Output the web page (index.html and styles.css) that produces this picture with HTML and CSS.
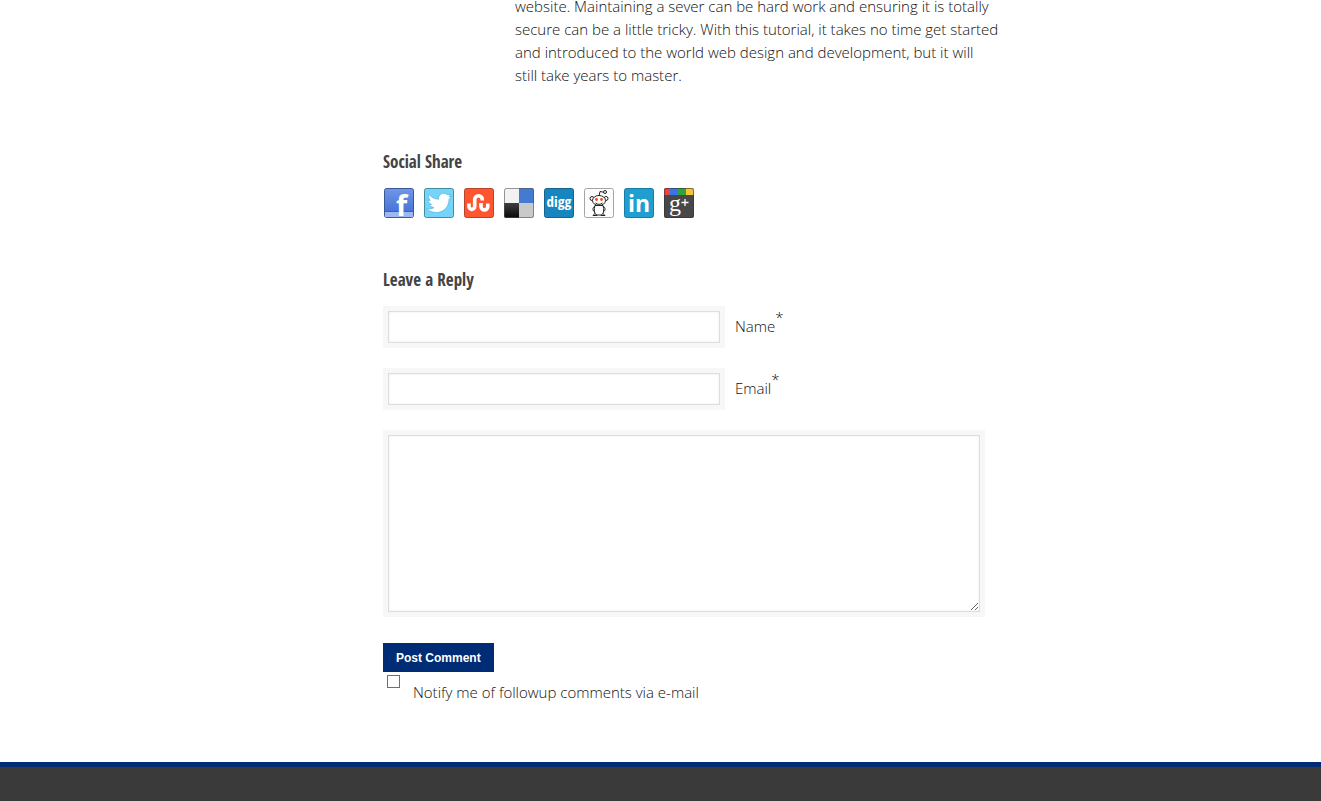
FILE: index.html
```html
<!DOCTYPE html>
<html lang="en">
<head>
<meta charset="utf-8">
<title>Leave a Reply</title>
<meta name="viewport" content="width=device-width, initial-scale=1">
<link rel="stylesheet" href="styles.css">
</head>
<body>
<div class="page">
  <main class="content">
    <article class="entry">
      <p>website. Maintaining a sever can be hard work and ensuring it is totally secure can be a little tricky. With this tutorial, it takes no time get started and introduced to the world web design and development, but it will<br>still take years to master.</p>
    </article>

    <section class="share">
      <h3 class="heading">Social Share</h3>
      <div class="share-list">
        <a href="#" aria-label="Facebook"><svg class="icon" viewBox="0 0 32 32">
          <defs><linearGradient id="fb" x1="0" y1="0" x2="0" y2="1"><stop offset="0" stop-color="#6f97e8"/><stop offset="1" stop-color="#3f6bd3"/></linearGradient></defs>
          <rect x="1.5" y="1.5" width="29" height="29" rx="2" fill="url(#fb)" stroke="#3b5795"/>
          <path d="M2 25h28v5H2z" fill="#9db8f0"/><path d="M2 24.5h28" stroke="#3b5fb5" stroke-width="1"/>
          <text class="logo-f" x="13" y="29">f</text></svg></a>
        <a href="#" aria-label="Twitter"><svg class="icon" viewBox="0 0 32 32">
          <rect x="1.5" y="1.5" width="29" height="29" rx="2" fill="#76d3fa" stroke="#418c9f"/>
          <path d="M3.500 21.500c3.500.9 6 .3 7.500-1-2.500-.3-4-1.300-4.500-3l2-.1c-2-.9-3.200-2.500-3.200-4.500l2 .5C5.600 11.800 5 9.800 6.200 7.500c2.700 3.200 5.500 4.500 9.400 4.700-.5-3.400 2.200-6 5.100-5.900 1.700 0 3 .7 3.900 1.800l3-1.100-1.300 2.700 2.200-.2-2.500 2.800c.2 6.800-4.700 13.200-12.500 13.200-4 0-7.500-1.300-10-4z" fill="#fff" stroke="#4eb5dd" stroke-width=".7"/></svg></a>
        <a href="#" aria-label="StumbleUpon"><svg class="icon" viewBox="0 0 32 32">
          <rect x="1.500" y="1.500" width="29" height="29" rx="2" fill="#ff5630" stroke="#bb432b"/>
          <path d="M6 16.500v3a2.800 2.800 0 0 0 5.700 0v-7a3.800 3.800 0 0 1 7.600 0v1" fill="none" stroke="#fff" stroke-width="3.600"/>
          <path d="M18 16v3.500a3.400 3.400 0 0 0 6.800 0v-3" fill="none" stroke="#fff" stroke-width="3.600"/></svg></a>
        <a href="#" aria-label="Delicious"><svg class="icon" viewBox="0 0 32 32">
          <defs><linearGradient id="dk" x1="0" y1="0" x2="0" y2="1"><stop offset="0" stop-color="#404040"/><stop offset="1" stop-color="#080808"/></linearGradient></defs>
          <rect x="1" y="1" width="30" height="30" rx="2" fill="#f2f2f2"/>
          <path d="M16 1h13a2 2 0 0 1 2 2v13H16z" fill="#447bd0"/><path d="M1 16h15v15H3a2 2 0 0 1-2-2z" fill="url(#dk)"/><path d="M16 16h15v13a2 2 0 0 1-2 2H16z" fill="#c9c9c9"/>
          <rect x="1.500" y="1.500" width="29" height="29" rx="2" fill="none" stroke="#555" stroke-opacity=".6"/></svg></a>
        <a href="#" aria-label="Digg"><svg class="icon" viewBox="0 0 32 32">
          <rect x="1.500" y="1.500" width="29" height="29" rx="2" fill="#1786c0" stroke="#17638b"/>
          <text class="logo-digg" x="16" y="20" text-anchor="middle">digg</text></svg></a>
        <a href="#" aria-label="Reddit"><svg class="icon" viewBox="0 0 32 32">
          <rect x="1.500" y="1.500" width="29" height="29" rx="2" fill="#fcfcfc" stroke="#a5a5a5"/>
          <g fill="#fff" stroke="#222" stroke-width="1">
            <path d="M16 9l1-4.500 4 .8" fill="none"/><circle cx="22" cy="5" r="1.500"/>
            <circle cx="9" cy="11.500" r="2"/><circle cx="23" cy="11.500" r="2"/>
            <path d="M12 19c-3 2-2.500 5 0 6M20 19c3 2 2.500 5 0 6"/>
            <path d="M12 18.500c-1.300 4-.8 7.500 1 9.500h6c1.800-2 2.300-5.500 1-9.500z"/>
            <ellipse cx="16" cy="13.500" rx="6.500" ry="5"/><path d="M12.500 16c2 1.800 5 1.800 7 0M10 28.500c1-2 3-2 4 0zM18 28.500c1-2 3-2 4 0z"/>
          </g><circle cx="13.500" cy="12.500" r="1.400" fill="#f04b20"/><circle cx="18.500" cy="12.500" r="1.400" fill="#f04b20"/></svg></a>
        <a href="#" aria-label="LinkedIn"><svg class="icon" viewBox="0 0 32 32">
          <rect x="1.500" y="1.500" width="29" height="29" rx="2" fill="#1f9ed1" stroke="#187ca7"/>
          <text class="logo-in" x="16" y="25" text-anchor="middle">in</text></svg></a>
        <a href="#" aria-label="Google Plus"><svg class="icon" viewBox="0 0 32 32">
          <rect x="1" y="1" width="30" height="30" rx="2" fill="#484848"/>
          <path d="M3 1h5v7H1V3a2 2 0 0 1 2-2z" fill="#e8463d"/><path d="M7 1h8v7H7z" fill="#3b74e6"/><path d="M15 1h8v7h-8z" fill="#2da33c"/><path d="M23 1h6a2 2 0 0 1 2 2v5h-8z" fill="#f7c534"/>
          <rect x="1.500" y="1.500" width="29" height="29" rx="2" fill="none" stroke="#333" stroke-opacity=".6"/>
          <text class="logo-g" x="6" y="24">g</text><path d="M18.500 15.500h7M22 12v7" stroke="#fff" stroke-width="1.300"/></svg></a>
      </div>
    </section>

    <section class="reply">
      <h3 class="heading">Leave a Reply</h3>
      <form class="form">
        <div class="row">
          <span class="field"><input class="input" type="text" id="author" required></span>
          <label class="label" for="author">Name<sup>*</sup></label>
        </div>
        <div class="row">
          <span class="field"><input class="input" type="email" id="email" required></span>
          <label class="label" for="email">Email<sup>*</sup></label>
        </div>
        <div class="field field-wide"><textarea class="input textarea" aria-label="Comment"></textarea></div>
        <button class="submit" type="submit">Post Comment</button>
        <div class="notify">
          <input class="check" type="checkbox" id="subscribe">
          <label for="subscribe">Notify me of followup comments via e-mail</label>
        </div>
      </form>
    </section>
  </main>
</div>
<footer class="footer"></footer>
</body>
</html>
```
FILE: styles.css
```css
* { box-sizing: border-box; }
html, body { height: 100%; }
body {
  margin: 0;
  display: flex;
  flex-direction: column;
  overflow: hidden;
  background: #fff;
  color: #111;
  font: 325 15px/23px "Open Sans", sans-serif;
}
p, h3 { margin: 0; }
.page {
  width: 100%;
  max-width: 955px;
  margin: -5px auto 0;
  padding-left: 200px;
}
.entry { max-width: 626px; padding-left: 132px; }
.heading {
  color: #444;
  font: bold 17px/24px "Open Sans Condensed", "Noto Sans Condensed", "Liberation Sans Narrow", "Open Sans", sans-serif;
}
.share { margin-top: 63px; }
.share-list { display: flex; gap: 8px; margin-top: 13px; }
.share-list a { display: block; height: 32px; }
.icon { display: block; width: 32px; height: 32px; overflow: visible; }
.icon text { fill: #fff; font-family: "Open Sans", sans-serif; font-weight: 700; }
.icon .logo-f { font-size: 29px; }
.icon .logo-digg { font-size: 15px; font-family: "Open Sans Condensed", "Liberation Sans Narrow", "Open Sans", sans-serif; }
.icon .logo-in { font-size: 23px; }
.icon .logo-g { font-family: "Liberation Serif", serif; font-size: 24px; font-weight: 400; }

.reply { margin-top: 49px; }
.form { margin-top: 14px; }
.row { display: flex; align-items: center; gap: 10px; margin-bottom: 20px; }
.field { display: block; width: 342px; padding: 5px; background: #f7f7f7; }
.field-wide { width: 602px; max-width: 100%; }
.input {
  display: block;
  width: 100%;
  height: 32px;
  padding: 5px;
  border: 1px solid #ddd;
  border-radius: 0;
  background: #fff;
  box-shadow: inset 0 0 3px #eee;
  font: inherit;
  outline: 0;
}
.textarea { height: 177px; resize: both; }
.label { padding-bottom: 2px; }
sup { font-size: 15px; line-height: 0; vertical-align: 9px; }
.submit {
  display: block;
  height: 29px;
  margin-top: 26px;
  padding: 1px 13px 0;
  border: 0;
  background: #002c76;
  color: #fff;
  font: bold 12px/28px "Liberation Sans", Arial, sans-serif;
}
.notify { display: flex; align-items: flex-start; gap: 13px; padding: 3px 0 0 4px; }
.notify label { padding-top: 6px; }
.check {
  appearance: none;
  width: 13px;
  height: 13px;
  margin: 0;
  border: 1px solid #707070;
  background: #fff;
}
.check:checked { background: #002c76; }
.footer {
  flex: 1 0 auto;
  margin-top: 58px;
  border-top: 5px solid #002c76;
  background: #3a3a3a;
}
```
